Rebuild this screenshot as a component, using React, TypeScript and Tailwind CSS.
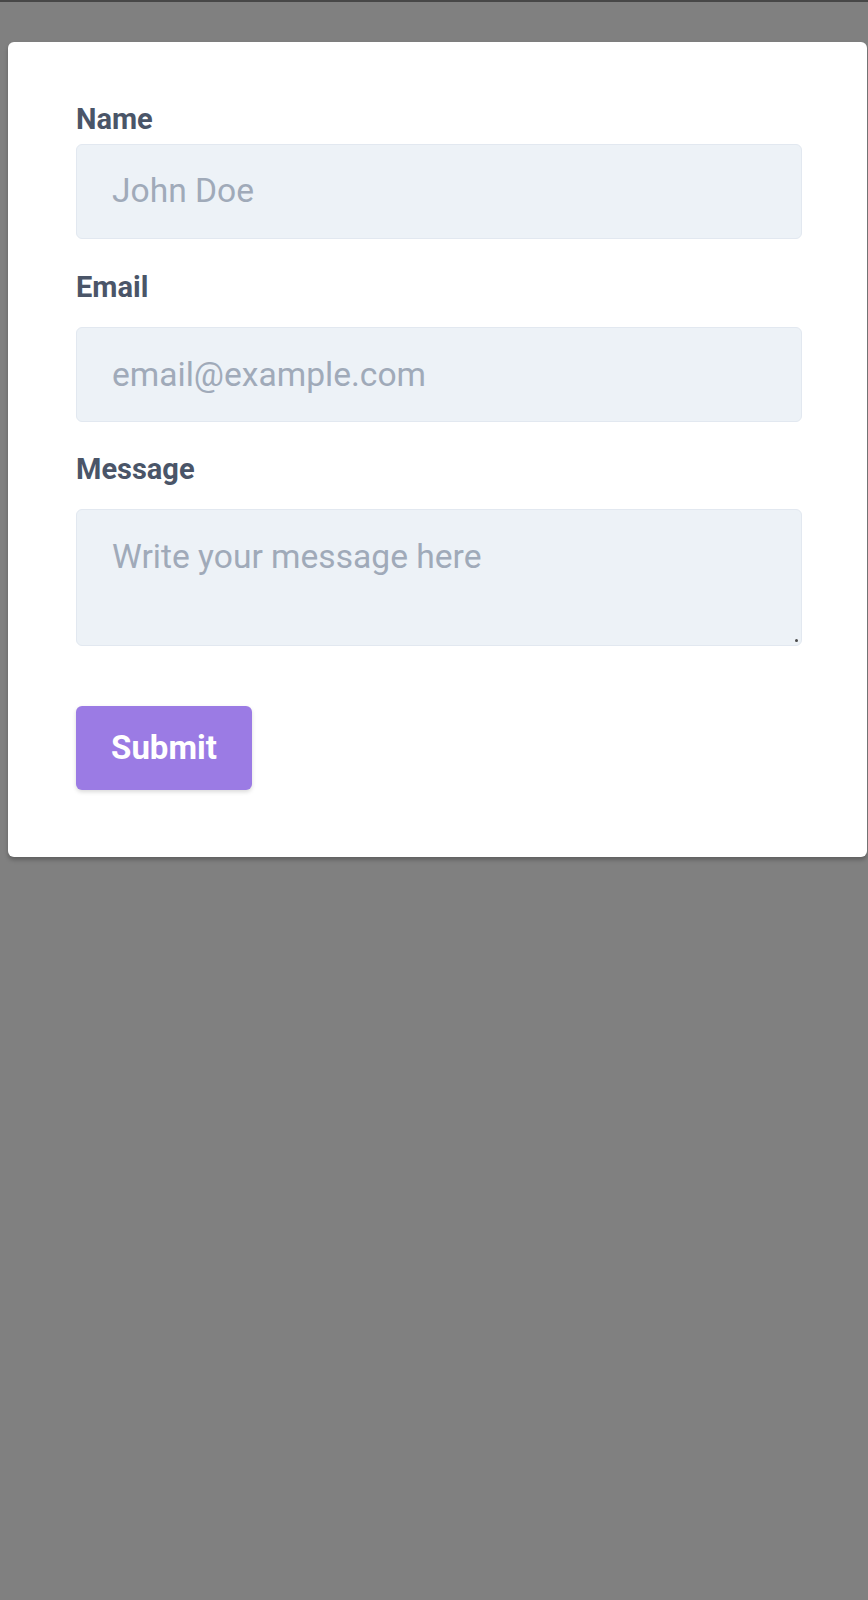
import React from "react";

export default function App() {
  return (
    <div className="min-h-[1600px] w-full bg-[#808080] font-['Roboto','Noto_Sans',sans-serif]">
      <div className="h-[2px] w-full bg-[#474747]" />
      <div className="ml-2 mt-[40px] w-[859px] rounded-[6px] bg-white pl-[68px] pt-[60px] pb-[67px] shadow-[0_3px_4px_rgba(0,0,0,0.25)]">
        <form className="flex w-[726px] flex-col" onSubmit={(e) => e.preventDefault()}>
          <label className="block text-[29px] font-bold leading-[34px] text-[#4a5568]">Name</label>
          <input
            type="text"
            placeholder="John Doe"
            className="mt-[8px] h-[95px] w-full rounded-[6px] border border-[#e2e8f0] bg-[#edf2f7] px-[35px] pb-[2px] text-[33.6px] text-[#4a5568] outline-none placeholder:text-[#a0aab9]"
          />
          <label className="mt-[31px] block text-[29px] font-bold leading-[34px] text-[#4a5568]">Email</label>
          <input
            type="email"
            placeholder="email@example.com"
            className="mt-[23px] h-[95px] w-full rounded-[6px] border border-[#e2e8f0] bg-[#edf2f7] px-[35px] pb-0 text-[33.6px] text-[#4a5568] outline-none placeholder:text-[#a0aab9]"
          />
          <label className="mt-[30px] block text-[29px] font-bold leading-[34px] text-[#4a5568]">Message</label>
          <div className="relative mt-[23px]">
            <textarea
              placeholder="Write your message here"
              className="block h-[137px] w-full resize-none rounded-[6px] border border-[#e2e8f0] bg-[#edf2f7] px-[35px] pt-[22px] text-[33.6px] leading-[49px] text-[#4a5568] outline-none placeholder:text-[#a0aab9]"
            />
            <span className="absolute bottom-[4px] right-[4px] h-[3px] w-[3px] rounded-full bg-[#4a4a4a]" />
          </div>
          <button
            type="submit"
            className="mt-[60px] flex h-[84px] w-[176px] items-center justify-center rounded-[6px] bg-[#9b7be4] text-[33px] font-bold text-white shadow-[0_2px_4px_rgba(0,0,0,0.15)]"
          >
            Submit
          </button>
        </form>
      </div>
    </div>
  );
}
